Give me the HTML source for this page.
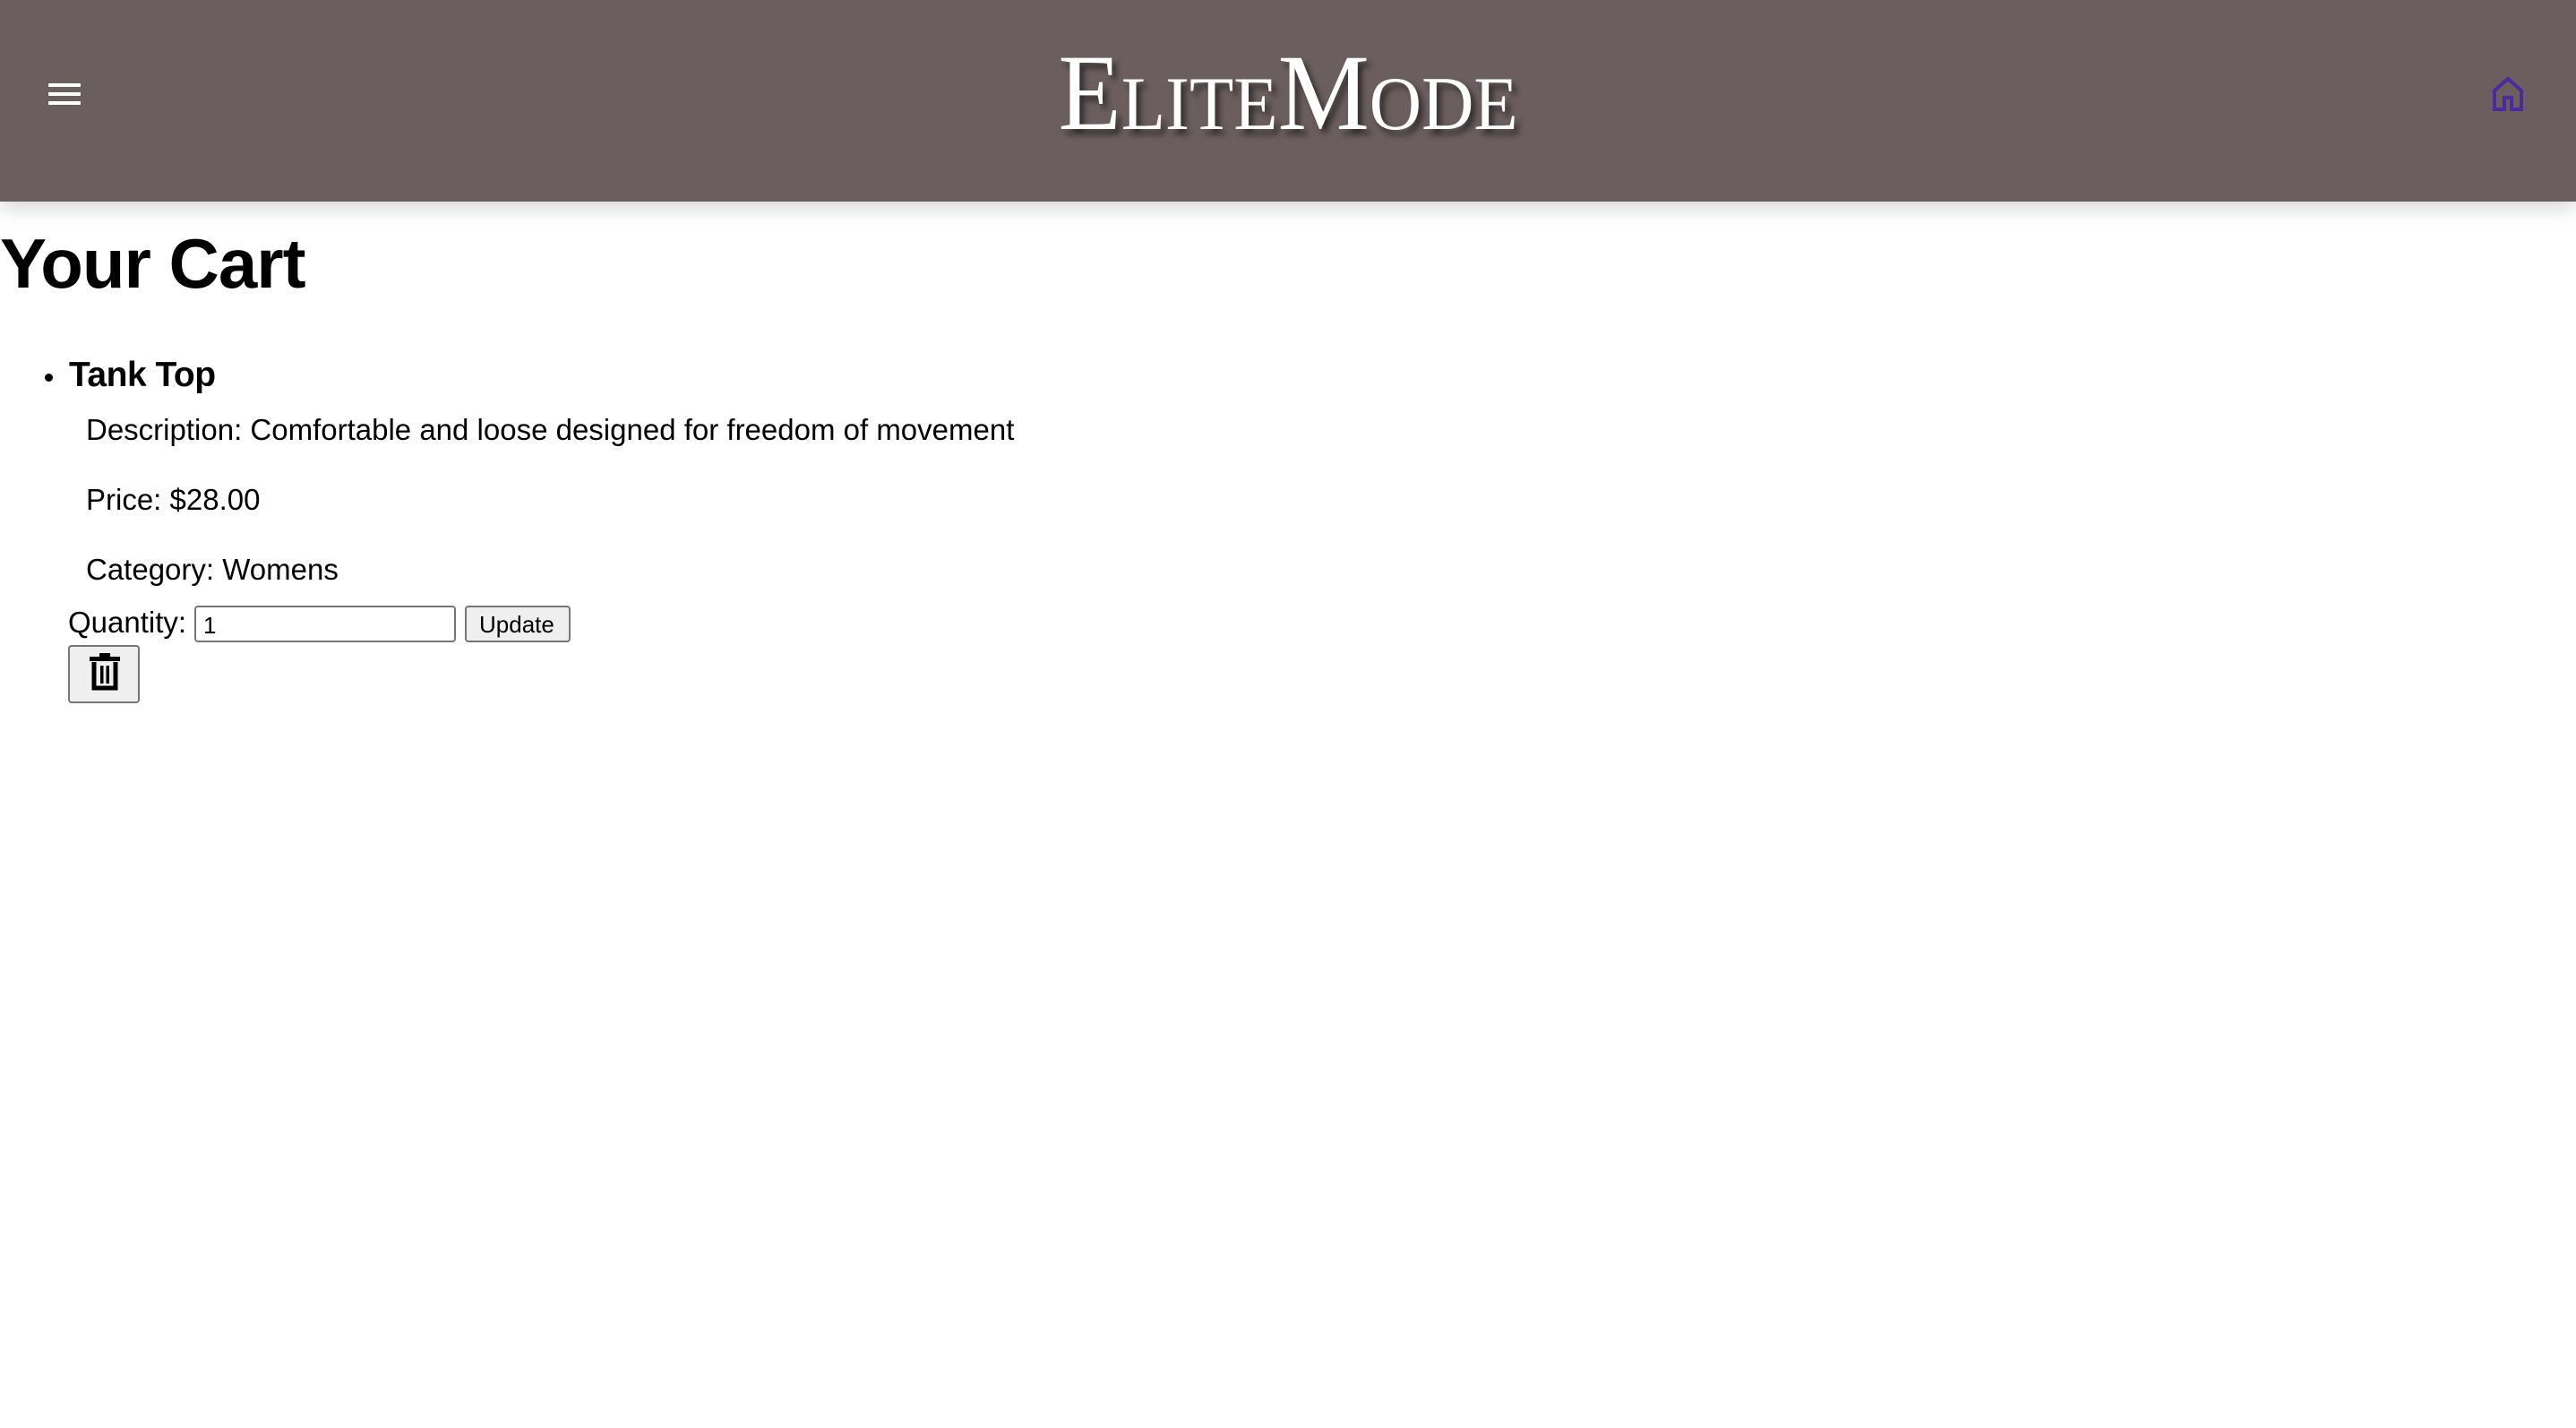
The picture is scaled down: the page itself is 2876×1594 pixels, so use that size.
<!DOCTYPE html>
<html><head><meta charset="utf-8"><style>
html,body{margin:0;padding:0;background:#fff;width:2876px;height:1594px;overflow:hidden;position:relative;font-family:"Liberation Sans",sans-serif;color:#000}
.hdr{position:absolute;left:0;top:0;width:2876px;height:225px;background:#6b5e5e;box-shadow:0 6px 22px rgba(0,0,0,.18)}
.t{position:absolute;line-height:1;white-space:nowrap}
.logo{position:absolute;left:0;width:2876px;top:44px;text-align:center;font-family:"Liberation Serif",serif;font-size:121px;line-height:1;color:#fff;font-variant:small-caps;text-shadow:5px 6px 7px rgba(0,0,0,.55)}
.logo span{display:inline-block;transform:scaleX(.95)}
.inp{position:absolute;left:217px;top:676px;width:292px;height:41px;border:2px solid #767676;border-radius:4px;box-sizing:border-box;background:#fff}
.btn{position:absolute;border:2px solid #767676;border-radius:4px;background:#efefef;box-sizing:border-box}
</style></head><body>
<div class="hdr">
<svg style="position:absolute;left:54px;top:93px" width="36" height="24"><rect x="0" y="0" width="36" height="4" fill="#fff"/><rect x="0" y="10" width="36" height="4" fill="#fff"/><rect x="0" y="20" width="36" height="4" fill="#fff"/></svg>
<div class="logo"><span>EliteMode</span></div>
<svg style="position:absolute;left:2782px;top:85px" width="36" height="40" viewBox="0 0 36 40"><path d="M3 16 L18 3 L33 16 V37 H22 V24 H14 V37 H3 Z" fill="none" stroke="#4b2a9b" stroke-width="4" stroke-linejoin="miter"/></svg>
</div>
<div class="t" style="left:0;top:255px;font-size:78px;font-weight:bold;letter-spacing:-1px">Your Cart</div>
<div style="position:absolute;left:50px;top:417px;width:9px;height:9px;border-radius:50%;background:#000"></div>
<div class="t" style="left:77px;top:399px;font-size:39px;font-weight:bold;letter-spacing:-0.5px">Tank Top</div>
<div class="t" style="left:96px;top:463px;font-size:33px">Description: Comfortable and loose designed for freedom of movement</div>
<div class="t" style="left:96px;top:541px;font-size:33px">Price: $28.00</div>
<div class="t" style="left:96px;top:619px;font-size:33px">Category: Womens</div>
<div class="t" style="left:76px;top:678px;font-size:33px">Quantity:</div>
<div class="inp"><span class="t" style="left:8px;top:7px;font-size:26px">1</span></div>
<div class="btn" style="left:519px;top:676px;width:118px;height:41px"><span class="t" style="left:14px;top:6px;font-size:26px">Update</span></div>
<div class="btn" style="left:76px;top:720px;width:80px;height:65px">
<svg style="position:absolute;left:22px;top:7px" width="34" height="42" viewBox="0 0 34 42"><rect x="0" y="4" width="34" height="5" fill="#000"/><rect x="11" y="0" width="12" height="5" fill="#000"/><path d="M5 10 V39 H29 V10" fill="none" stroke="#000" stroke-width="5"/><rect x="12" y="14" width="3.5" height="20" fill="#000"/><rect x="18.5" y="14" width="3.5" height="20" fill="#000"/></svg>
</div>
</body></html>
